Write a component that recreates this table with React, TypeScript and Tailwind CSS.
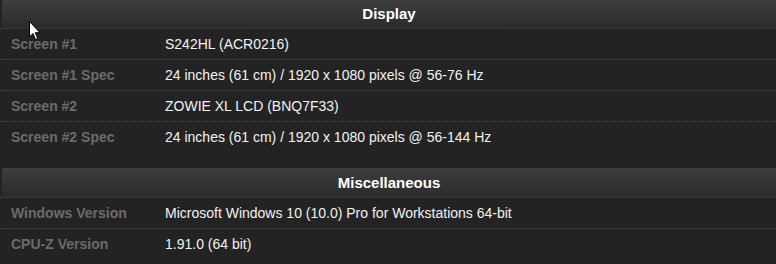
const display = [
  { label: "Screen #1", value: "S242HL (ACR0216)" },
  { label: "Screen #1 Spec", value: "24 inches (61 cm) / 1920 x 1080 pixels @ 56-76 Hz" },
  { label: "Screen #2", value: "ZOWIE XL LCD (BNQ7F33)" },
  { label: "Screen #2 Spec", value: "24 inches (61 cm) / 1920 x 1080 pixels @ 56-144 Hz" },
];

const misc = [
  { label: "Windows Version", value: "Microsoft Windows 10 (10.0) Pro for Workstations 64-bit" },
  { label: "CPU-Z Version", value: "1.91.0 (64 bit)" },
];

const Section = ({
  title,
  rows,
  headerH,
}: {
  title: string;
  rows: { label: string; value: string }[];
  headerH: string;
}) => (
  <div>
    <div
      className={`ml-[2px] flex items-center justify-center bg-gradient-to-b from-[#3d3d3d] to-[#2b2b2b] text-[15px] font-bold text-white ${headerH}`}
    >
      {title}
    </div>
    {rows.map((r) => (
      <div
        key={r.label}
        className="flex h-[31px] items-center border-t border-dotted border-[#4a4a4a] text-[14px]"
      >
        <div className="w-[165px] pl-[11px] font-bold text-[#6b6b6b]">{r.label}</div>
        <div className="text-[#f2f2f2]">{r.value}</div>
      </div>
    ))}
  </div>
);

const App = () => {
  return (
    <div
      className="relative h-[264px] w-[776px] overflow-hidden bg-[#232323]"
      style={{ fontFamily: '"Liberation Sans", Arial, sans-serif' }}
    >
      <Section title="Display" rows={display} headerH="h-[28px]" />
      <div className="h-[16px]" />
      <Section title="Miscellaneous" rows={misc} headerH="h-[29px] pt-px" />

      {/* mouse pointer captured in the screenshot */}
      <svg
        className="absolute left-[29px] top-[21px]"
        width="13"
        height="20"
        viewBox="0 0 13 20"
      >
        <path
          d="M0.5 0.5 L0.5 16 L4 12.5 L6.5 18.5 L8.8 17.5 L6.3 11.7 L11 11.7 Z"
          fill="#ffffff"
          stroke="#000000"
          strokeWidth="1"
          strokeLinejoin="round"
        />
      </svg>
    </div>
  );
};

export default App;
